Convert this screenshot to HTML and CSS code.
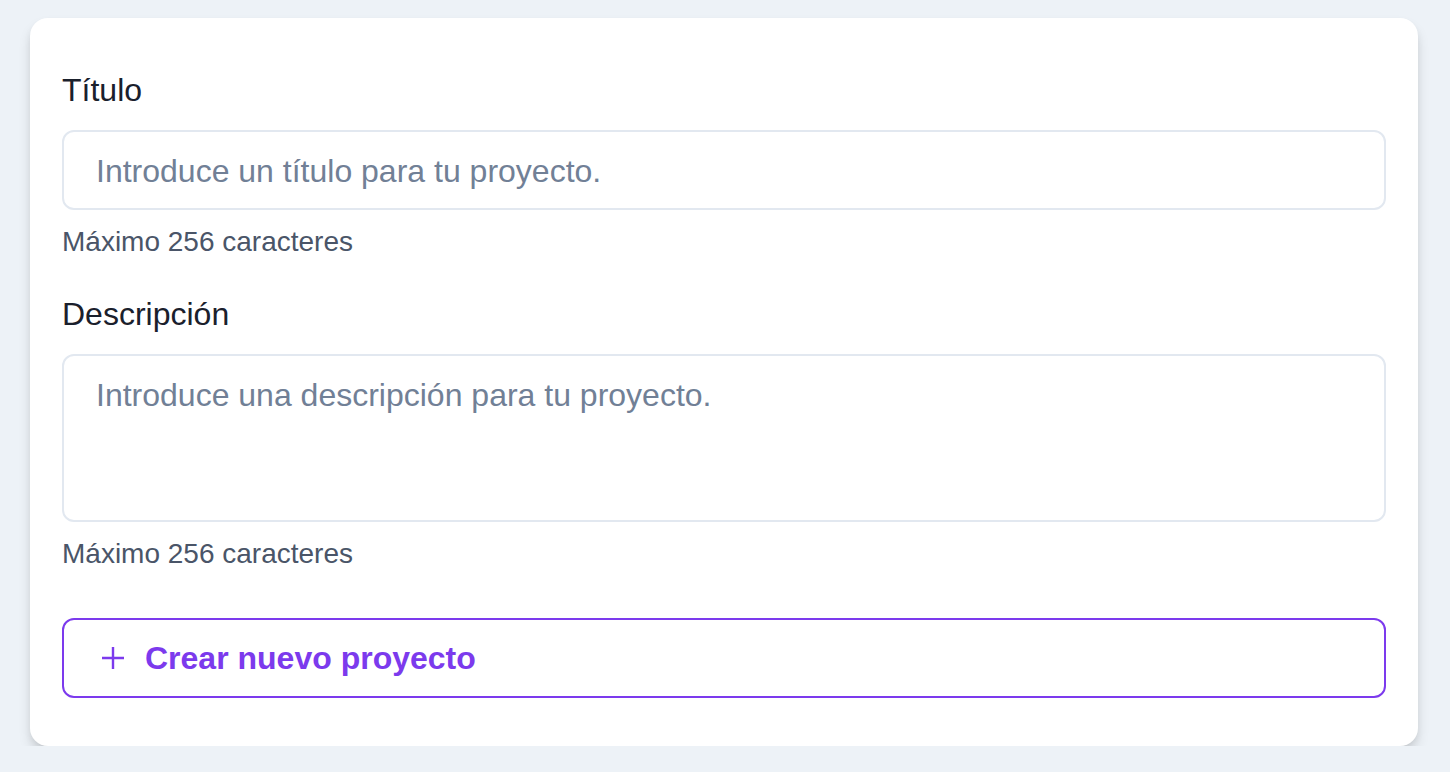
FILE: index.html
```html
<!DOCTYPE html>
<html lang="es">
<head>
<meta charset="utf-8">
<title>Nuevo proyecto</title>
<link rel="stylesheet" href="styles.css">
</head>
<body>
  <main class="page">
    <form class="card">
      <label class="label" for="titulo">Título</label>
      <input class="field" id="titulo" type="text" placeholder="Introduce un título para tu proyecto.">
      <p class="help">Máximo 256 caracteres</p>

      <label class="label label-second" for="descripcion">Descripción</label>
      <textarea class="field area" id="descripcion" placeholder="Introduce una descripción para tu proyecto."></textarea>
      <p class="help">Máximo 256 caracteres</p>

      <button class="btn" type="button">
        <svg class="btn-icon" width="22" height="22" viewBox="0 0 22 22" aria-hidden="true">
          <path d="M11 0v22M0 11h22" stroke="currentColor" stroke-width="2.4" fill="none"/>
        </svg>
        <span>Crear nuevo proyecto</span>
      </button>
    </form>
  </main>
</body>
</html>
```

FILE: styles.css
```css
* { box-sizing: border-box; }

html, body {
  margin: 0;
  padding: 0;
  background: #edf2f7;
  font-family: "Liberation Sans", Arial, Helvetica, sans-serif;
}

.page {
  padding: 18px 32px 0 30px;
}

.card {
  display: flex;
  flex-direction: column;
  background: #ffffff;
  border-radius: 18px;
  padding: 48px 32px 48px 32px;
  box-shadow: 0 8px 14px -2px rgba(0, 0, 0, 0.16), 0 4px 8px -2px rgba(0, 0, 0, 0.08);
}

.label {
  display: block;
  font-size: 32px;
  line-height: 48px;
  color: #1a202c;
  margin: 0 0 16px 0;
}

.label-second {
  margin-top: 28px;
}

.field {
  display: block;
  width: 100%;
  height: 80px;
  border: 2px solid #e2e8f0;
  border-radius: 12px;
  padding: 15px 32px 13px 32px;
  font-family: inherit;
  font-size: 32px;
  line-height: 48px;
  color: #1a202c;
  background: #ffffff;
  outline: none;
  margin: 0;
}

.field::placeholder {
  color: #718096;
  opacity: 1;
}

.area {
  height: 168px;
  resize: none;
  overflow: hidden;
}

.help {
  margin: 12px 0 0 0;
  font-size: 28px;
  line-height: 40px;
  color: #4a5568;
}

.btn {
  margin-top: 44px;
  display: flex;
  align-items: center;
  gap: 21px;
  width: 100%;
  height: 80px;
  padding: 0 38px;
  background: #ffffff;
  border: 2px solid #7c3aed;
  border-radius: 12px;
  color: #7c3aed;
  font-family: inherit;
  font-size: 32px;
  font-weight: 700;
  cursor: pointer;
}

.btn-icon {
  flex: none;
  display: block;
}
```
